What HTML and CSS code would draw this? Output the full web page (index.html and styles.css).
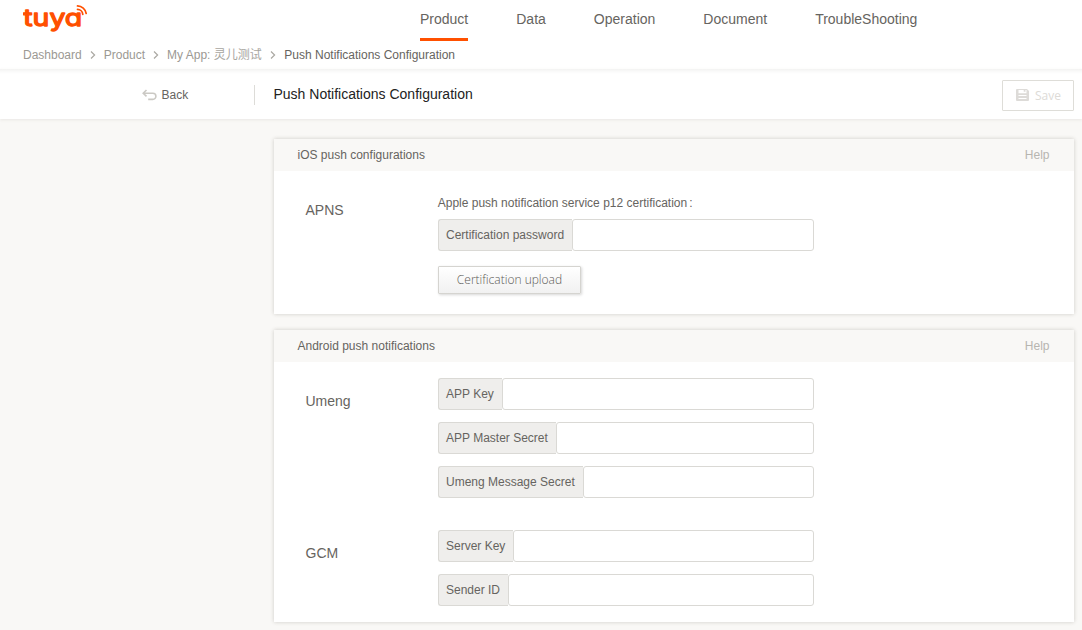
FILE: index.html
```
<!DOCTYPE html>
<html lang="en">
<head>
<meta charset="utf-8">
<title>Push Notifications Configuration</title>
<link rel="stylesheet" href="styles.css">
</head>
<body>
<header class="header">
  <div class="topbar">
    <svg class="logo" width="66" height="36" viewBox="0 0 66 36" role="img" aria-label="tuya">
      <text class="logo-word" x="0.3" y="26" textLength="59" lengthAdjust="spacingAndGlyphs">tuya</text>
      <path class="logo-wave" d="M54.5 9.3A5.5 5.5 0 0 1 59.8 14.3M54.5 5.9A9 9 0 0 1 63.2 13.5"/>
    </svg>
    <nav class="nav">
      <a class="nav-item active">Product</a>
      <a class="nav-item">Data</a>
      <a class="nav-item">Operation</a>
      <a class="nav-item">Document</a>
      <a class="nav-item">TroubleShooting</a>
    </nav>
  </div>
  <div class="crumbs">
    <span>Dashboard</span>
    <svg class="chevron" width="6" height="8" viewBox="0 0 6 8"><path d="M1 .5 4.6 4 1 7.5"/></svg>
    <span>Product</span>
    <svg class="chevron" width="6" height="8" viewBox="0 0 6 8"><path d="M1 .5 4.6 4 1 7.5"/></svg>
    <span>My App: <span class="cjk">灵儿测试</span></span>
    <svg class="chevron" width="6" height="8" viewBox="0 0 6 8"><path d="M1 .5 4.6 4 1 7.5"/></svg>
    <span class="current">Push Notifications Configuration</span>
  </div>
</header>
<div class="toolbar">
  <a class="back">
    <svg class="back-icon" width="15" height="12" viewBox="0 0 15 12"><path d="M4.5 1 1.2 4.2 4.5 7.4M1.5 4.2H10.8A2.9 2.9 0 0 1 10.8 10.4H6.2"/></svg>
    <span>Back</span>
  </a>
  <h1 class="title">Push Notifications Configuration</h1>
  <button class="save" disabled>
    <svg width="13" height="12" viewBox="0 0 13 12"><path class="disk" fill-rule="evenodd" d="M1 0H11L13 2V11A1 1 0 0 1 12 12H1A1 1 0 0 1 0 11V1A1 1 0 0 1 1 0ZM2.5 1V4.2H10.5V1H9.5V2.8H7.7V1ZM2.5 6V7H10.5V6ZM2.5 9V10H10.5V9Z"/></svg>
    <span>Save</span>
  </button>
</div>
<main class="content">
  <section class="card ios">
    <div class="card-head"><span>iOS push configurations</span><a class="help">Help</a></div>
    <div class="row">
      <h2 class="name">APNS</h2>
      <div class="fields">
        <p class="hint">Apple push notification service p12 certification<span class="colon">:</span></p>
        <label class="field"><span class="tag">Certification password</span><input class="box" type="text"></label>
        <button class="upload">Certification upload</button>
      </div>
    </div>
  </section>
  <section class="card android">
    <div class="card-head"><span>Android push notifications</span><a class="help">Help</a></div>
    <div class="row">
      <h2 class="name">Umeng</h2>
      <div class="fields">
        <label class="field"><span class="tag">APP Key</span><input class="box" type="text"></label>
        <label class="field"><span class="tag">APP Master Secret</span><input class="box" type="text"></label>
        <label class="field"><span class="tag">Umeng Message Secret</span><input class="box" type="text"></label>
      </div>
    </div>
    <div class="row gcm">
      <h2 class="name">GCM</h2>
      <div class="fields">
        <label class="field"><span class="tag">Server Key</span><input class="box" type="text"></label>
        <label class="field"><span class="tag">Sender ID</span><input class="box" type="text"></label>
      </div>
    </div>
  </section>
</main>
</body>
</html>
```
FILE: styles.css
```
* { box-sizing: border-box; }
html { overflow: hidden; }
body {
  margin: 0;
  min-height: 630px;
  background: #f9f8f6;
  color: #666460;
  font: 12px/16px "Liberation Sans", Arial, "Noto Sans CJK SC", sans-serif;
}
h1, h2, p { margin: 0; font-weight: normal; }

.header {
  height: 69px;
  padding-left: 23px;
  background: #fff;
}
.topbar { display: flex; height: 41px; }
.logo { flex: none; }
.logo-word {
  font: 400 24px Inter, sans-serif;
  font-feature-settings: "cv11";
  fill: #ff5000;
  stroke: #ff5000;
  stroke-width: 1.3;
  stroke-linejoin: round;
}
.logo-wave { fill: none; stroke: #ff5000; stroke-width: 1.7; stroke-linecap: round; }
.nav { display: flex; gap: 48px; margin-left: 331px; }
.nav-item {
  height: 41px;
  padding-top: 11px;
  border-bottom: 3px solid transparent;
  font-size: 14px;
}
.nav-item.active { border-color: #ff5000; }

.crumbs {
  display: flex;
  align-items: center;
  gap: 8px;
  height: 28px;
  color: #9b9993;
}
.chevron { fill: none; stroke: #aaa8a2; stroke-width: 1.2; }
.cjk { color: #a8a6a0; margin-right: 0.5px; }
.current { color: #666460; }

.toolbar {
  display: flex;
  align-items: center;
  height: 50px;
  padding: 1px 8px 0 142px;
  background: linear-gradient(#f3f3f2, #fbfbfb 3px, #fff 5px);
  box-shadow: 0 1px 3px rgba(80, 70, 60, 0.09);
}
.back { display: flex; align-items: center; gap: 4.5px; width: 112px; }
.back-icon { fill: none; stroke: #cbc9c4; stroke-width: 1.6; }
.title {
  height: 20px;
  padding-left: 18.5px;
  border-left: 1px solid #dddcd8;
  color: #222;
  font-size: 14px;
  line-height: 18px;
}
.save {
  display: flex;
  align-items: center;
  gap: 6px;
  width: 72px;
  height: 31px;
  margin: 1px 0 0 auto;
  padding: 0 0 0 13px;
  border: 1px solid #deddd8;
  border-radius: 1px;
  background: #fff;
  color: #dddbd7;
  font: 12px/16px "Open Sans", sans-serif;
}
.save span { margin-top: 1px; }
.save svg { margin-top: -1px; }
.disk { fill: #dddbd8; }

.content {
  display: grid;
  gap: 16px;
  width: 800px;
  margin: 20px 0 0 274px;
}
.card { background: #fff; box-shadow: 0 0 4px rgba(50, 45, 35, 0.22); }
.ios { height: 175px; }
.android { height: 292px; }
.card-head {
  display: flex;
  justify-content: space-between;
  align-items: center;
  height: 32px;
  padding: 0 24.5px 0 23.5px;
  background: #f9f8f6;
}
.help { color: #b7b5b0; }
.row { display: flex; padding-top: 16px; }
.name {
  width: 164px;
  padding: 15px 0 0 31.5px;
  font-size: 14px;
}
.fields { display: grid; gap: 12px; width: 376px; }
.ios .fields { gap: 0; padding-top: 8px; }
.gcm { padding-top: 32px; }
.hint { margin: 0 0 8px -0.3px; }
.colon { margin-left: 2px; }
.field { display: flex; height: 32px; border-radius: 3px; }
.tag {
  padding: 0 7.85px 0 7px;
  border: 1px solid #dad9d5;
  border-right: 0;
  border-radius: 3px 0 0 3px;
  background: #efeeec;
  line-height: 30px;
  white-space: nowrap;
}
.box {
  flex: 1;
  min-width: 0;
  padding: 0 8px;
  border: 1px solid #dad9d5;
  border-radius: 3px;
  background: #fff;
}
.upload {
  width: 143px;
  height: 28px;
  margin-top: 15px;
  padding: 0;
  border: 1px solid #d5d4d0;
  border-radius: 1px;
  background: linear-gradient(#fff, #f1f1f1);
  box-shadow: 1px 1px 3px rgba(0, 0, 0, 0.16);
  color: #5c5a56;
  font: 300 12px/16px "Open Sans", sans-serif;
}
```
